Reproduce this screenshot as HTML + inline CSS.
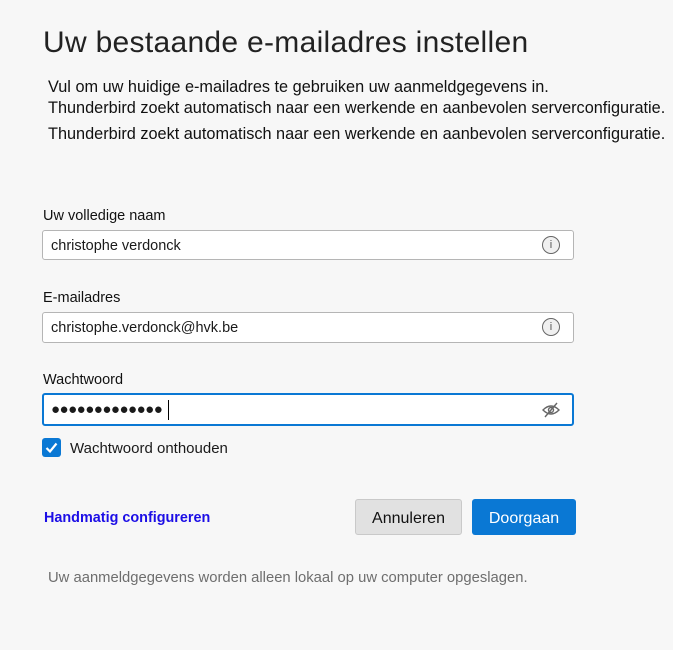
<!DOCTYPE html>
<html><head><meta charset="utf-8"><style>
body{margin:0;width:673px;height:650px;background:#f7f7f7;font-family:"Liberation Sans",sans-serif;color:#1a1a1a;position:relative;overflow:hidden}
.a{position:absolute;white-space:nowrap}
h1{position:absolute;left:43px;top:26px;margin:0;font-weight:normal;font-size:30px;color:#222;letter-spacing:0.3px}
.d{left:48px;font-size:16.3px;color:#111}
.l{left:43px;font-size:14.5px;color:#111}
.in{position:absolute;left:42px;width:532px;height:30px;background:#fff;border:1px solid #b5b5b5;border-radius:3px;box-sizing:border-box}
.in span{position:absolute;left:8px;top:7px;font-size:14.5px}
.ic{position:absolute;right:13px;top:5px;width:18px;height:18px;border:1px solid #666;border-radius:50%;box-sizing:border-box;font-size:11px;text-align:center;line-height:16px;color:#555;background:#f0f0f0}
.btn{position:absolute;top:499px;height:36px;padding-top:3px;border-radius:3px;box-sizing:border-box;font-size:16px;display:flex;align-items:center;justify-content:center}
</style></head><body>
<h1>Uw bestaande e-mailadres instellen</h1>
<div class="a d" style="top:78px">Vul om uw huidige e-mailadres te gebruiken uw aanmeldgegevens in.</div>
<div class="a d" style="top:99px">Thunderbird zoekt automatisch naar een werkende en aanbevolen serverconfiguratie.</div>
<div class="a d" style="top:125px">Thunderbird zoekt automatisch naar een werkende en aanbevolen serverconfiguratie.</div>

<div class="a l" style="top:208px">Uw volledige naam</div>
<div class="in" style="top:230px"><span>christophe verdonck</span><div class="ic">i</div></div>
<div class="a l" style="top:290px">E-mailadres</div>
<div class="in" style="top:312px;height:31px"><span>christophe.verdonck@hvk.be</span><div class="ic">i</div></div>
<div class="a l" style="top:372px">Wachtwoord</div>
<div class="in" style="top:393px;height:33px;border:2px solid #0a78d4"><span style="left:7px;top:6px;font-size:15px;letter-spacing:-0.5px">●●●●●●●●●●●●●</span><div style="position:absolute;left:124px;top:5px;width:1px;height:20px;background:#000"></div>
<svg style="position:absolute;right:12px;top:7px" width="18" height="16" viewBox="0 0 18 16"><path d="M1 8 Q9 0 17 8 Q9 16 1 8Z" fill="none" stroke="#666" stroke-width="1.4"/><circle cx="9" cy="8" r="2.5" fill="none" stroke="#666" stroke-width="1.4"/><path d="M3 15 L15 1" stroke="#666" stroke-width="1.4"/></svg></div>
<div style="position:absolute;left:42px;top:438px;width:19px;height:19px;background:#0a78d4;border-radius:3px"><svg width="19" height="19"><path d="M4.5 10 L8 13.5 L14.5 5.5" fill="none" stroke="#fff" stroke-width="2.2"/></svg></div>
<div class="a" style="left:70px;top:440px;font-size:15px">Wachtwoord onthouden</div>

<div class="a" style="left:44px;top:510px;font-size:14.4px;font-weight:bold;color:#1c0ee6">Handmatig configureren</div>
<div class="btn" style="left:355px;width:107px;background:#e1e1e1;border:1px solid #c9c9c9;color:#111">Annuleren</div>
<div class="btn" style="left:472px;width:104px;background:#0a78d4;color:#fff">Doorgaan</div>
<div class="a" style="left:48px;top:570px;font-size:14.8px;color:#6e6e6e">Uw aanmeldgegevens worden alleen lokaal op uw computer opgeslagen.</div>
</body></html>
